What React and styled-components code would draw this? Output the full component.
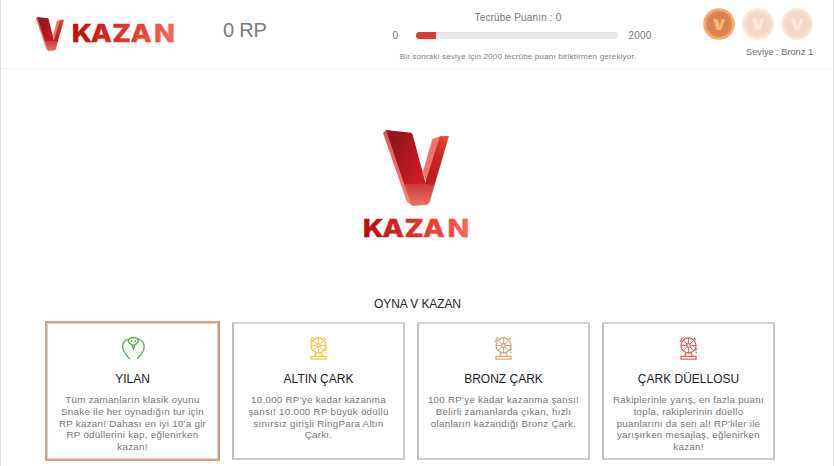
import React from "react";
import styled, { createGlobalStyle } from "styled-components";

const GlobalStyle = createGlobalStyle`
  * { box-sizing: border-box; }
  body { margin: 0; background: #fff; overflow: hidden; }
`;

const Page = styled.div`
  width: 834px;
  height: 466px;
  overflow: hidden;
  border-left: 1px solid #dedede;
  border-right: 1px solid #e2e2e2;
  font-family: "Liberation Sans", Arial, sans-serif;
  color: #777;
`;

const Header = styled.header`
  display: flex;
  height: 69px;
  border-bottom: 1px solid #f1f1f1;
`;

const Brand = styled.div`
  display: flex;
  align-items: flex-start;
  width: 222px;
  padding: 17px 0 0 35px;
`;

const BrandWord = styled.div`
  display: flex;
  margin: 4px 0 0 9px;
`;

const Balance = styled.div`
  width: 150px;
  padding-top: 19px;
  font-size: 20px;
  line-height: 23px;
  letter-spacing: -0.2px;
  color: #7b7b7b;
`;

const Progress = styled.div`
  display: flex;
  flex-direction: column;
  align-items: center;
  width: 290px;
  padding-top: 11px;
`;

const ProgressTitle = styled.div`
  font-size: 10px;
  line-height: 13px;
  letter-spacing: 0.17px;
`;

const ProgressRow = styled.div`
  display: grid;
  grid-template-columns: 23px 202px 34px;
  align-items: center;
  width: 259px;
  height: 15px;
  margin: 4px 0 0 8px;
  font-size: 10px;
  letter-spacing: 0.2px;
`;

const Limit = styled.span`
  text-align: ${(p) => p.$align};
`;

const Track = styled.div`
  height: 7px;
  border-radius: 4px;
  overflow: hidden;
  background: #ebebeb;
  box-shadow: inset 0 1px 1px #dfdfdf;
`;

const Fill = styled.div`
  width: 20px;
  height: 7px;
  background: #dc3a3d;
`;

const Hint = styled.div`
  margin-top: 8px;
  font-size: 8px;
  letter-spacing: 0.19px;
  line-height: 12px;
  white-space: nowrap;
  color: #808080;
`;

const Levels = styled.div`
  flex: 1;
  padding: 8px 20px 0 0;
  text-align: right;
`;

const Medals = styled.div`
  display: flex;
  justify-content: flex-end;
  gap: 7px;
`;

const LevelText = styled.div`
  margin-top: 6px;
  font-size: 9.2px;
  line-height: 12px;
  color: #6d6d6d;
`;

const Hero = styled.section`
  display: flex;
  flex-direction: column;
  align-items: center;
  height: 228px;
  padding: 61px 2px 0 0;
`;

const HeroWord = styled.div`
  display: flex;
  margin-top: 10px;
`;

const Heading = styled.h2`
  margin: 0 0 0 1px;
  font-size: 12px;
  line-height: 15px;
  font-weight: 400;
  letter-spacing: -0.1px;
  color: #212529;
  text-align: center;
`;

const Cards = styled.div`
  display: flex;
  justify-content: space-between;
  align-items: flex-start;
  width: 730px;
  margin: 9px 0 0 44px;
`;

const Card = styled.article`
  display: flex;
  flex-direction: column;
  align-items: center;
  width: ${(p) => (p.$active ? 175 : 173)}px;
  height: ${(p) => (p.$active ? 140 : 138)}px;
  margin-top: ${(p) => (p.$active ? 0 : 1)}px;
  padding-top: ${(p) => (p.$active ? 13 : 12)}px;
  border: 2px solid;
  border-color: ${(p) => (p.$active ? "#dfa183 #cd947c #dc9f82 #dc9f82" : "#d6d6d6 #c9c9c9 #cecece #c0c0c0")};
  box-shadow: ${(p) => (p.$active ? "inset 0 0 0 1px #d5d5d5" : "none")};
`;

const CardTitle = styled.h3`
  margin: 12px 0 0;
  font-size: 12px;
  line-height: 14px;
  font-weight: 400;
  color: #212529;
`;

const CardText = styled.p`
  margin: 8px 0 0;
  font-size: 9.75px;
  line-height: 11.75px;
  letter-spacing: 0.28px;
  text-align: center;
  white-space: pre;
  color: #777;
`;

function VMark({ width, height, id }) {
  return (
    <svg width={width} height={height} viewBox="99 29 197 228" preserveAspectRatio="none">
      <defs>
        <linearGradient id={`${id}-front`} x1="0" y1="0" x2="1" y2="0.7">
          <stop offset="0" stopColor="#85151a" />
          <stop offset=".5" stopColor="#a8161d" />
          <stop offset="1" stopColor="#d01e24" />
        </linearGradient>
        <linearGradient id={`${id}-right`} x1="0" y1="1" x2="1" y2="0">
          <stop offset="0" stopColor="#b7191e" />
          <stop offset=".6" stopColor="#cc2427" />
          <stop offset="1" stopColor="#ec5136" />
        </linearGradient>
        <linearGradient id={`${id}-foot`} x1="0" y1="0" x2="0" y2="1">
          <stop offset="0" stopColor="#c93a38" />
          <stop offset="1" stopColor="#e8746a" />
        </linearGradient>
        <linearGradient id={`${id}-side`} x1="0" y1="0" x2="0" y2="1">
          <stop offset="0" stopColor="#d95754" />
          <stop offset="1" stopColor="#f38b80" />
        </linearGradient>
      </defs>
      <path d="M99 38 108 29 190 190 188 257 170 244Z" fill={`url(#${id}-side)`} />
      <path d="M246 56 271 48 229 188 218 156Z" fill="#f0736c" />
      <path d="M108 29 183 37 187 41 226 188 217 197 163 194Z" fill={`url(#${id}-front)`} />
      <path d="M269 48 296 47 252 197H211L225 188Z" fill={`url(#${id}-right)`} />
      <path d="M163 192 225 190 253 195 238 246 231 253 188 257 180 246Z" fill={`url(#${id}-foot)`} />
    </svg>
  );
}

function Word({ width, id }) {
  return (
    <svg width={width} height="26" viewBox="0 0 105 26" preserveAspectRatio="none" overflow="visible">
      <defs>
        <linearGradient id={id} gradientUnits="userSpaceOnUse" x1="0" y1="0" x2="91" y2="0">
          <stop offset="0" stopColor="#b70f0d" />
          <stop offset=".48" stopColor="#dc3228" />
          <stop offset="1" stopColor="#fa6656" />
        </linearGradient>
      </defs>
      <text
        x="-1.2 15.9 35.2 51.4 72.6" y="21" transform="scale(1.15 1)"
        fontFamily="Inter, sans-serif" fontWeight="800" fontSize="24.7"
        fill={`url(#${id})`} stroke={`url(#${id})`} strokeWidth=".3"
      >KAZAN</text>
    </svg>
  );
}

function Medal({ active }) {
  return (
    <svg width="32" height="32" viewBox="0 0 32 32" opacity={active ? 1 : 0.3}>
      <circle cx="16" cy="16" r="14.4" fill="#d98250" stroke="#f6ae6d" strokeWidth="2.8" />
      <circle cx="16" cy="16" r="12" fill="none" stroke="#e08f59" strokeWidth="1" />
      <path d="M10 11h4.5l2.2 6.5 2-6.5h3.5l-4 11h-4.4Z" fill="#fcb775" />
    </svg>
  );
}

function SnakeIcon() {
  return (
    <svg width="26" height="24" viewBox="0 0 26 24" fill="none" stroke="#4fb85a" strokeWidth="1.4" strokeLinecap="round" strokeLinejoin="round">
      <path d="M8.4 4.2C10 .6 16.8.6 18.4 4.2 18.6 6.7 15.5 8.8 13.4 9.4 11.3 8.8 8.2 6.7 8.4 4.2Z" />
      <path d="M11.5 4.6v.8M15.3 4.6v.8M12.2 9.4l.4 2.3h1.6l.4-2.3M13.4 11.7v1.2" />
      <path d="M8.6 3.2C5 4.2 2.6 7.3 2.6 11c0 2.2.9 4.3 2.6 6.6L9.4 22.6" />
      <path d="M18.2 3.2C21.8 4.2 24.2 7.3 24.2 11c0 2.2-.9 4.3-2.6 6.6L17.4 22.6" />
    </svg>
  );
}

function WheelIcon({ color }) {
  return (
    <svg width="20" height="24" viewBox="0 0 20 24" fill="none" stroke={color} strokeWidth="1.35">
      <circle cx="9.5" cy="9.5" r="7.5" />
      <circle cx="9.5" cy="9.5" r="1.8" />
      <path d="M9.5 2v5.7M9.5 11.3V17M2 9.5h5.7M11.3 9.5H17M4.2 4.2l4 4M10.8 10.8l4 4M14.8 4.2l-4 4M8.2 10.8l-4 4" strokeWidth="1" />
      <path d="M7 17 5.8 20M12 17l1.2 3M2 20.3h15v2.8H2Z" />
      <path d="M.8 6 3 3.2M1.5 2.5l3-.9M14.8 1.7l2 2M16 14.5l1.8-1.8M16.5 16.3H18" strokeWidth="1.3" />
    </svg>
  );
}

const games = [
  { title: "YILAN", active: true, text: "Tüm zamanların klasik oyunu\nSnake ile her oynadığın tur için\nRP kazan! Dahası en iyi 10'a gir\nRP ödüllerini kap, eğlenirken\nkazan!" },
  { title: "ALTIN ÇARK", color: "#fbc746", text: "10.000 RP'ye kadar kazanma\nşansı! 10.000 RP büyük ödüllü\nsınırsız girişli RingPara Altın\nÇarkı." },
  { title: "BRONZ ÇARK", color: "#e5a17d", text: "100 RP'ye kadar kazanma şansı!\nBelirli zamanlarda çıkan, hızlı\nolanların kazandığı Bronz Çark." },
  { title: "ÇARK DÜELLOSU", color: "#e56566", text: "Rakiplerinle yarış, en fazla puanı\ntopla, rakiplerinin düello\npuanlarını da sen al! RP'liler ile\nyarışırken mesajlaş, eğlenirken\nkazan!" },
];

export default function App() {
  return (
    <Page>
      <GlobalStyle />
      <Header>
        <Brand>
          <VMark width={28} height={34} id="brand" />
          <BrandWord><Word width={102} id="brand-word" /></BrandWord>
        </Brand>
        <Balance>0 RP</Balance>
        <Progress>
          <ProgressTitle>Tecrübe Puanın : 0</ProgressTitle>
          <ProgressRow>
            <Limit $align="left">0</Limit>
            <Track><Fill /></Track>
            <Limit $align="right">2000</Limit>
          </ProgressRow>
          <Hint>Bir sonraki seviye için 2000 tecrübe puanı biriktirmen gerekiyor.</Hint>
        </Progress>
        <Levels>
          <Medals><Medal active /><Medal /><Medal /></Medals>
          <LevelText>Seviye : Bronz 1</LevelText>
        </Levels>
      </Header>
      <Hero>
        <VMark width={66} height={76} id="hero" />
        <HeroWord><Word width={105} id="hero-word" /></HeroWord>
      </Hero>
      <Heading>OYNA V KAZAN</Heading>
      <Cards>
        {games.map((g) => (
          <Card key={g.title} $active={g.active}>
            {g.active ? <SnakeIcon /> : <WheelIcon color={g.color} />}
            <CardTitle>{g.title}</CardTitle>
            <CardText>{g.text}</CardText>
          </Card>
        ))}
      </Cards>
    </Page>
  );
}
